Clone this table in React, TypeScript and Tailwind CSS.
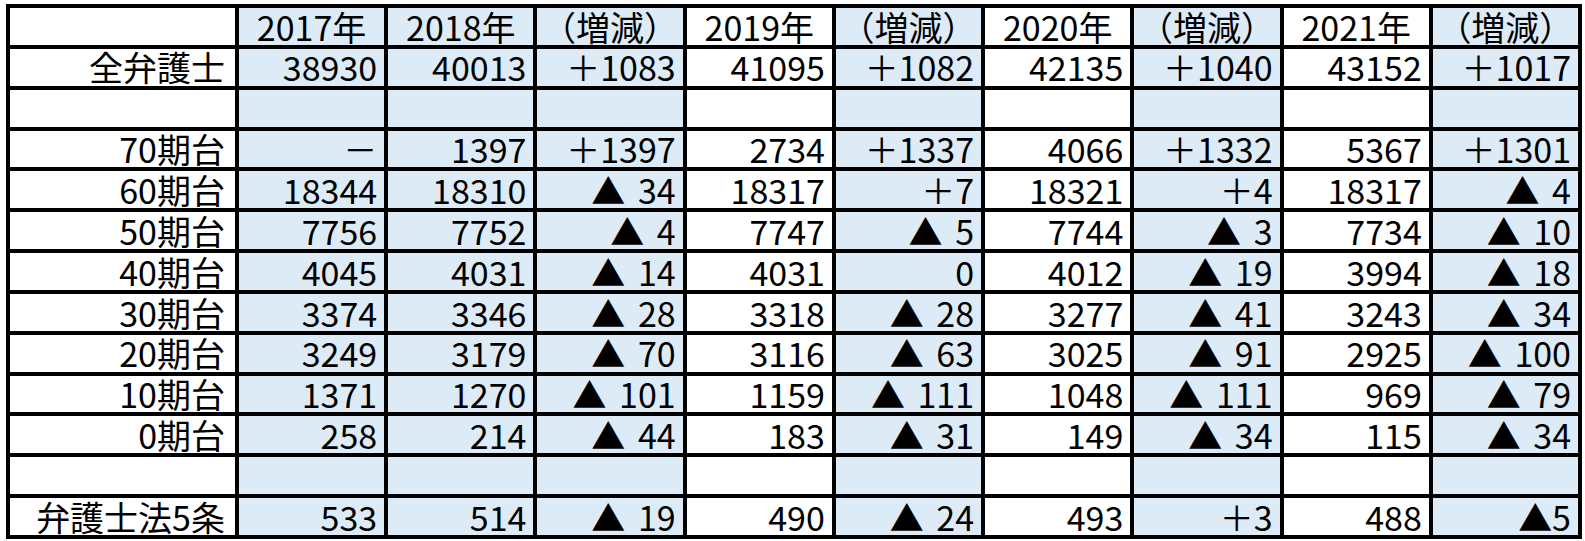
import * as React from "react";

type Row = { label: string; values: string[] };

const header = ["2017年", "2018年", "（増減）", "2019年", "（増減）", "2020年", "（増減）", "2021年", "（増減）"];

const rows: Row[] = [
  { label: "全弁護士", values: ["38930", "40013", "＋1083", "41095", "＋1082", "42135", "＋1040", "43152", "＋1017"] },
  { label: "", values: ["", "", "", "", "", "", "", "", ""] },
  { label: "70期台", values: ["－", "1397", "＋1397", "2734", "＋1337", "4066", "＋1332", "5367", "＋1301"] },
  { label: "60期台", values: ["18344", "18310", "▲ 34", "18317", "＋7", "18321", "＋4", "18317", "▲ 4"] },
  { label: "50期台", values: ["7756", "7752", "▲ 4", "7747", "▲ 5", "7744", "▲ 3", "7734", "▲ 10"] },
  { label: "40期台", values: ["4045", "4031", "▲ 14", "4031", "0", "4012", "▲ 19", "3994", "▲ 18"] },
  { label: "30期台", values: ["3374", "3346", "▲ 28", "3318", "▲ 28", "3277", "▲ 41", "3243", "▲ 34"] },
  { label: "20期台", values: ["3249", "3179", "▲ 70", "3116", "▲ 63", "3025", "▲ 91", "2925", "▲ 100"] },
  { label: "10期台", values: ["1371", "1270", "▲ 101", "1159", "▲ 111", "1048", "▲ 111", "969", "▲ 79"] },
  { label: "0期台", values: ["258", "214", "▲ 44", "183", "▲ 31", "149", "▲ 34", "115", "▲ 34"] },
  { label: "", values: ["", "", "", "", "", "", "", "", ""] },
  { label: "弁護士法5条", values: ["533", "514", "▲ 19", "490", "▲ 24", "493", "＋3", "488", "▲5"] },
];

const isYear = (i: number) => i % 2 === 0 || i === 1;

function Cell({ children, shaded, align }: { children?: React.ReactNode; shaded: boolean; align: "center" | "right" }) {
  return (
    <div
      className={`${shaded ? "bg-[#ddebf7]" : "bg-white"} flex items-center whitespace-nowrap ${
        align === "center" ? "justify-center" : "justify-end pr-[7px]"
      }`}
    >
      <span className="block leading-[1.05] [word-spacing:5px]">{children}</span>
    </div>
  );
}

export default function App() {
  return (
    <div className="w-[1585px] h-[541px] bg-white pt-[4px] pl-[6px] text-black text-[34px] font-['Noto_Sans_CJK_JP',sans-serif]">
      <div className="w-[1576px] h-[535px] bg-black p-[4px] grid gap-[4px] grid-cols-[225px_repeat(9,minmax(0,1fr))] grid-rows-[repeat(13,minmax(0,1fr))]">
        <div className="bg-white" />
        {header.map((h, i) => (
          <Cell key={`h${i}`} shaded={isYear(i)} align="center">
            {h}
          </Cell>
        ))}
        {rows.map((row, r) => (
          <React.Fragment key={r}>
            <div className="bg-white flex items-center justify-end pr-[10px] whitespace-nowrap">
              <span className="block leading-[1.05]">{row.label}</span>
            </div>
            {row.values.map((v, i) => (
              <Cell key={i} shaded={isYear(i)} align="right">
                {v}
              </Cell>
            ))}
          </React.Fragment>
        ))}
      </div>
    </div>
  );
}
